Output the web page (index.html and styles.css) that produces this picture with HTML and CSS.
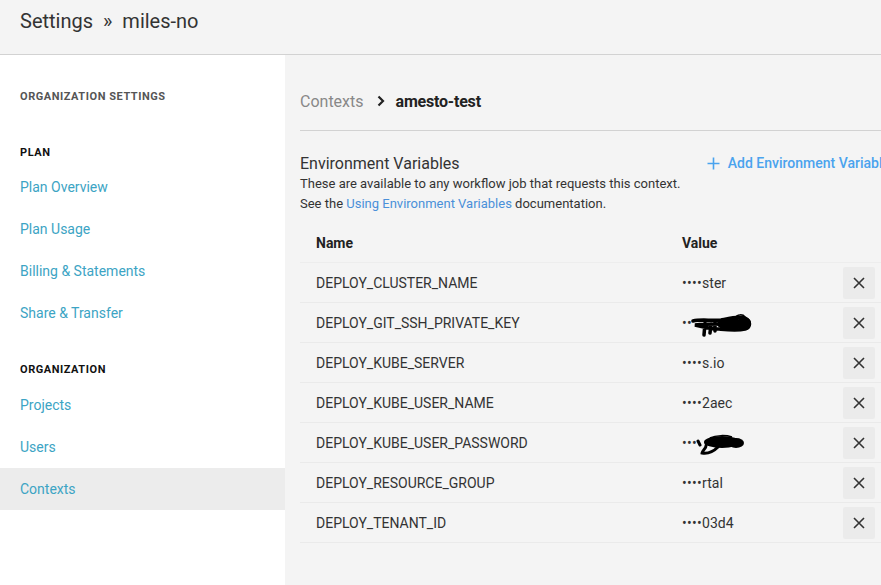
FILE: index.html
```html
<!DOCTYPE html>
<html>
<head>
<meta charset="utf-8">
<link rel="stylesheet" href="styles.css">
</head>
<body>
<header class="topbar">
  <h1 class="page-title">Settings <span class="sep">»</span> miles-no</h1>
</header>
<div class="layout">
  <nav class="sidebar">
    <div class="nav-heading muted">ORGANIZATION SETTINGS</div>
    <div class="nav-heading section">PLAN</div>
    <a class="nav-link">Plan Overview</a>
    <a class="nav-link">Plan Usage</a>
    <a class="nav-link">Billing &amp; Statements</a>
    <a class="nav-link">Share &amp; Transfer</a>
    <div class="nav-heading section second">ORGANIZATION</div>
    <a class="nav-link">Projects</a>
    <a class="nav-link">Users</a>
    <a class="nav-link active">Contexts</a>
  </nav>
  <main class="main">
    <div class="content">
      <div class="breadcrumb">
        <span class="crumb-parent">Contexts</span>
        <svg class="crumb-chevron" width="10" height="12" viewBox="0 0 10 12"><polyline points="2.5,1.5 7,6 2.5,10.5" fill="none" stroke="#222" stroke-width="2.2"/></svg>
        <span class="crumb-current">amesto-test</span>
      </div>
      <div class="divider"></div>
      <div class="section-head">
        <div class="section-text">
          <h2 class="section-title">Environment Variables</h2>
          <p class="desc">These are available to any workflow job that requests this context.</p>
          <p class="desc">See the <a class="doc-link">Using Environment Variables</a> documentation.</p>
        </div>
        <a class="add-btn">
          <svg width="13" height="13" viewBox="0 0 13 13"><path d="M6.5 0.5V12.5M0.5 6.5H12.5" stroke="#4aa3ee" stroke-width="1.6"/></svg>
          <span>Add Environment Variable</span>
        </a>
      </div>
      <div class="table">
        <div class="row head">
          <div class="cell name">Name</div>
          <div class="cell value">Value</div>
          <div class="cell action"></div>
        </div>
        <div class="row">
          <div class="cell name">DEPLOY_CLUSTER_NAME</div>
          <div class="cell value"><span class="dots">••••</span>ster</div>
          <div class="cell action"><button class="del"><svg width="12" height="12" viewBox="0 0 12 12"><path d="M1 1L11 11M11 1L1 11" stroke="#333" stroke-width="1.6"/></svg></button></div>
        </div>
        <div class="row">
          <div class="cell name">DEPLOY_GIT_SSH_PRIVATE_KEY</div>
          <div class="cell value"><span class="dots">••</span><svg class="scribble" width="62" height="26" viewBox="0 0 62 26"><path d="M2 8 C10 6 20 8 30 7 C40 5 48 3 54 5 C60 8 60 14 54 16 C46 18 38 17 28 16 C20 16 12 14 4 12 C12 11 22 11 30 11 M14 10 L13 22 M20 11 L19 20 M24 10 L24 18" fill="none" stroke="#000" stroke-width="3.5" stroke-linecap="round"/><ellipse cx="40" cy="11" rx="14" ry="6" fill="#000"/><ellipse cx="53" cy="10" rx="7" ry="6" fill="#000"/><path d="M44 5 C46 1 52 1 54 4" fill="none" stroke="#000" stroke-width="1.5"/></svg></div>
          <div class="cell action"><button class="del"><svg width="12" height="12" viewBox="0 0 12 12"><path d="M1 1L11 11M11 1L1 11" stroke="#333" stroke-width="1.6"/></svg></button></div>
        </div>
        <div class="row">
          <div class="cell name">DEPLOY_KUBE_SERVER</div>
          <div class="cell value"><span class="dots">••••</span>s.io</div>
          <div class="cell action"><button class="del"><svg width="12" height="12" viewBox="0 0 12 12"><path d="M1 1L11 11M11 1L1 11" stroke="#333" stroke-width="1.6"/></svg></button></div>
        </div>
        <div class="row">
          <div class="cell name">DEPLOY_KUBE_USER_NAME</div>
          <div class="cell value"><span class="dots">••••</span>2aec</div>
          <div class="cell action"><button class="del"><svg width="12" height="12" viewBox="0 0 12 12"><path d="M1 1L11 11M11 1L1 11" stroke="#333" stroke-width="1.6"/></svg></button></div>
        </div>
        <div class="row">
          <div class="cell name">DEPLOY_KUBE_USER_PASSWORD</div>
          <div class="cell value"><span class="dots">•••</span><svg class="scribble2" width="50" height="26" viewBox="0 0 50 26"><ellipse cx="26" cy="9" rx="18" ry="6" fill="#000"/><ellipse cx="40" cy="10" rx="8" ry="5" fill="#000"/><path d="M2 8 L4 12 M10 10 C12 14 6 18 6 20 C12 21 18 18 22 14" fill="none" stroke="#000" stroke-width="3" stroke-linecap="round"/><path d="M14 5 C20 2 30 2 36 4" fill="none" stroke="#000" stroke-width="1.5"/></svg></div>
          <div class="cell action"><button class="del"><svg width="12" height="12" viewBox="0 0 12 12"><path d="M1 1L11 11M11 1L1 11" stroke="#333" stroke-width="1.6"/></svg></button></div>
        </div>
        <div class="row">
          <div class="cell name">DEPLOY_RESOURCE_GROUP</div>
          <div class="cell value"><span class="dots">••••</span>rtal</div>
          <div class="cell action"><button class="del"><svg width="12" height="12" viewBox="0 0 12 12"><path d="M1 1L11 11M11 1L1 11" stroke="#333" stroke-width="1.6"/></svg></button></div>
        </div>
        <div class="row">
          <div class="cell name">DEPLOY_TENANT_ID</div>
          <div class="cell value"><span class="dots">••••</span>03d4</div>
          <div class="cell action"><button class="del"><svg width="12" height="12" viewBox="0 0 12 12"><path d="M1 1L11 11M11 1L1 11" stroke="#333" stroke-width="1.6"/></svg></button></div>
        </div>
      </div>
    </div>
  </main>
</div>
</body>
</html>
```
FILE: styles.css
```css
* { box-sizing: border-box; }
html, body {
  margin: 0;
  width: 881px;
  height: 585px;
  overflow: hidden;
  background: #f4f4f4;
  font-family: Roboto, "Liberation Sans", sans-serif;
  color: #333;
}
.topbar {
  height: 55px;
  background: #f4f4f4;
  border-bottom: 1px solid #d2d2d2;
  padding: 8px 0 0 20px;
}
.page-title {
  margin: 0;
  font-size: 20px;
  font-weight: 400;
  line-height: 26px;
  color: #333;
}
.sep { margin: 0 5px; }
.layout {
  display: flex;
  height: 530px;
}
.sidebar {
  width: 285px;
  flex: none;
  background: #fff;
  padding-top: 34px;
  display: flex;
  flex-direction: column;
}
.nav-heading {
  font-size: 11px;
  font-weight: 700;
  letter-spacing: 0.55px;
  line-height: 16px;
  padding-left: 20px;
  color: #111;
}
.nav-heading.muted { color: #555; }
.nav-heading.section { margin-top: 40px; margin-bottom: 5px; }
.nav-heading.second { margin-top: 28px; margin-bottom: 6px; }
.nav-link {
  display: block;
  height: 42px;
  line-height: 42px;
  padding-left: 20px;
  font-size: 14px;
  color: #3ca4c4;
}
.nav-link.active { background: #ececec; }
.main {
  flex: 1;
  min-width: 0;
  padding-left: 15px;
}
.content {
  width: 590px;
  padding-top: 36px;
}
.breadcrumb {
  display: flex;
  align-items: center;
  height: 20px;
  font-size: 16px;
}
.crumb-parent { color: #888; }
.crumb-chevron { margin: 0 10px 0 12px; }
.crumb-current { font-weight: 700; color: #222; letter-spacing: -0.2px; }
.divider {
  margin-top: 19px;
  height: 1px;
  background: #d2d2d2;
}
.section-head {
  display: flex;
  justify-content: space-between;
  align-items: flex-start;
  margin-top: 22px;
}
.section-title {
  margin: 0;
  font-size: 16px;
  font-weight: 400;
  line-height: 21px;
  color: #333;
}
.desc {
  margin: 0;
  font-size: 13px;
  line-height: 20px;
  color: #333;
}
.doc-link { color: #4a90d9; }
.add-btn {
  display: flex;
  align-items: center;
  gap: 8px;
  margin-top: 2px;
  font-size: 14px;
  font-weight: 500;
  color: #4aa3ee;
  white-space: nowrap;
}
.table { margin-top: 9px; }
.row {
  display: flex;
  align-items: center;
  height: 40px;
  border-bottom: 1px solid #eaeaea;
  font-size: 14px;
  color: #333;
}
.row.head { font-weight: 700; color: #222; border-bottom: 1px solid #ededed; }
.cell.name { width: 366px; padding-left: 16px; }
.cell.value { width: 177px; padding-left: 16px; display: flex; align-items: center; }
.cell.action { width: 47px; }
.dots { font-size: 14px; letter-spacing: 0.3px; }
.scribble { margin-top: 6px; margin-left: -1px; }
.scribble2 { margin-top: 6px; margin-left: -1px; }
.del {
  width: 32px;
  height: 32px;
  border: 0;
  border-radius: 2px;
  background: #ebebeb;
  display: flex;
  align-items: center;
  justify-content: center;
  padding: 0;
}
```
